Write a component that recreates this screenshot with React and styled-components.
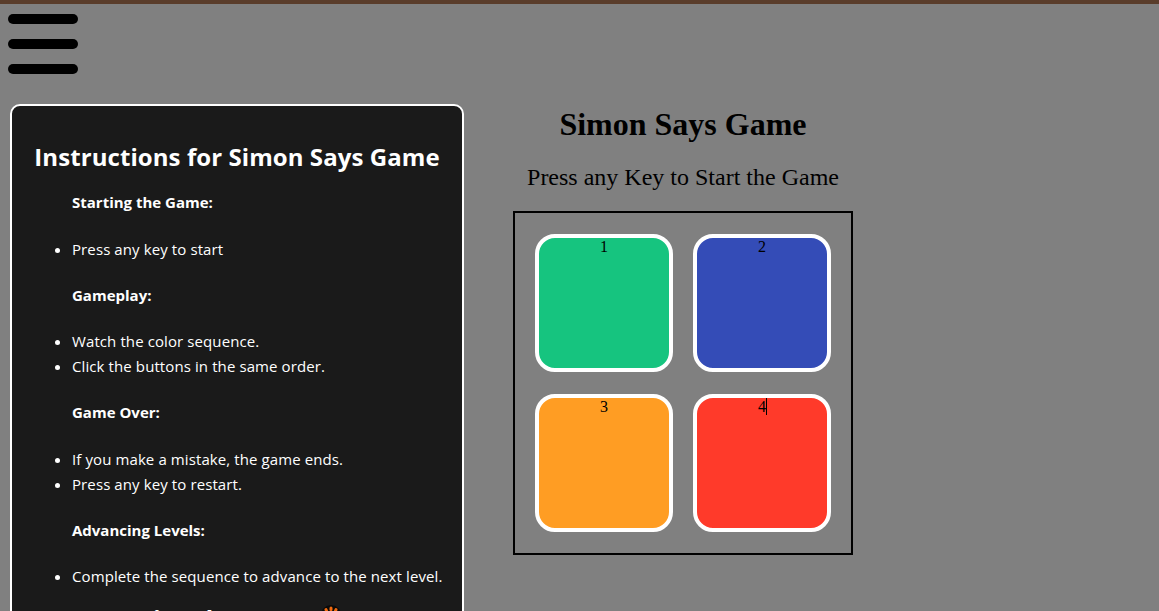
import React from "react";
import styled, { createGlobalStyle } from "styled-components";

const GlobalStyle = createGlobalStyle`
  html, body {
    margin: 0;
    height: 611px;
    overflow: hidden;
  }

  body {
    background-color: #808080;
    border-top: 4px solid #5a3d2b;
    box-sizing: border-box;
    font-family: "Liberation Serif", serif;
  }
`;

const sections = [
  { title: "Starting the Game:", items: ["Press any key to start"] },
  {
    title: "Gameplay:",
    items: ["Watch the color sequence.", "Click the buttons in the same order."],
  },
  {
    title: "Game Over:",
    items: ["If you make a mistake, the game ends.", "Press any key to restart."],
  },
  {
    title: "Advancing Levels:",
    items: ["Complete the sequence to advance to the next level."],
  },
];

const buttons = [
  { label: "1", color: "#16c47f" },
  { label: "2", color: "#344cb7" },
  { label: "3", color: "#ff9d23" },
  { label: "4", color: "#ff3a2a", caret: true },
];

const Burger = () => (
  <BurgerButton>
    <BurgerLine />
    <BurgerLine />
    <BurgerLine />
  </BurgerButton>
);

const ClosingIcon = () => (
  <IconSvg viewBox="0 0 20 20" width="20" height="20">
    <circle cx="10" cy="10" r="10" fill="#0a0a0a" />
    <g stroke="#f26a0f" strokeWidth="3" strokeLinecap="round">
      <path d="M10 3v1.6" />
      <path d="M5 4.6l.6 1.4" />
      <path d="M15 4.6l-.6 1.4" />
    </g>
  </IconSvg>
);

const Instructions = () => (
  <Panel>
    <PanelTitle>Instructions for Simon Says Game</PanelTitle>
    {sections.map((section) => (
      <div key={section.title}>
        <SectionTitle>{section.title}</SectionTitle>
        <List>
          {section.items.map((item) => (
            <li key={item}>{item}</li>
          ))}
        </List>
      </div>
    ))}
    <Closing>
      Enjoy the game! <ClosingIcon />
    </Closing>
  </Panel>
);

const App = () => (
  <>
    <GlobalStyle />
    <Burger />
    <Content>
      <Instructions />
      <Game>
        <GameTitle>Simon Says Game</GameTitle>
        <GameStatus>Press any Key to Start the Game</GameStatus>
        <Board>
          {buttons.map((button) => (
            <GameButton key={button.label} $color={button.color}>
              {button.label}
              {button.caret && <Caret />}
            </GameButton>
          ))}
        </Board>
      </Game>
    </Content>
  </>
);

const BurgerButton = styled.div`
  display: flex;
  flex-direction: column;
  gap: 15px;
  width: 70px;
  padding: 10px 0 0 8px;
`;

const BurgerLine = styled.span`
  display: block;
  height: 10px;
  border-radius: 5px;
  background-color: #000;
`;

const Content = styled.div`
  display: flex;
  align-items: flex-start;
  margin-top: 30px;
  padding-left: 10px;
`;

const Panel = styled.div`
  box-sizing: border-box;
  flex: none;
  width: 454px;
  padding: 20px 20px;
  border: 2px solid #fff;
  border-radius: 10px;
  background-color: #1a1a1a;
  color: #fff;
  font-family: "Open Sans", sans-serif;
`;

const PanelTitle = styled.h2`
  margin: 19px 0 0;
  font-size: 24px;
  line-height: 24px;
  font-weight: 700;
  letter-spacing: 0.07px;
  text-align: center;
  white-space: nowrap;
`;

const SectionTitle = styled.p`
  margin: 23.3px 0 0;
  padding-left: 40px;
  font-size: 15px;
  line-height: 21px;
  font-weight: 700;
`;

const List = styled.ul`
  margin: 23.3px 0 0;
  padding-left: 40px;
  font-size: 15px;
  line-height: 25px;
  letter-spacing: 0.1px;
  white-space: nowrap;
`;

const Closing = styled.h2`
  margin: 14px 0 0;
  font-size: 24px;
  line-height: 32px;
  font-weight: 700;
  text-align: center;
  white-space: nowrap;
`;

const IconSvg = styled.svg`
  margin-right: 9px;
  vertical-align: 3px;
`;

const Game = styled.div`
  display: flex;
  flex-direction: column;
  align-items: center;
  width: 340px;
  margin-left: 49px;
  padding-top: 2px;
`;

const GameTitle = styled.h1`
  margin: 0;
  font-size: 32px;
  line-height: 37px;
  font-weight: 700;
  white-space: nowrap;
`;

const GameStatus = styled.h2`
  margin: 20px 0 0;
  font-size: 24px;
  line-height: 28px;
  font-weight: 400;
  white-space: nowrap;
`;

const Board = styled.div`
  box-sizing: border-box;
  display: grid;
  grid-template-columns: repeat(2, 138px);
  gap: 22px 20px;
  width: 340px;
  height: 344px;
  margin-top: 20px;
  padding: 21px 20px;
  border: 2px solid #000;
`;

const GameButton = styled.div`
  box-sizing: border-box;
  position: relative;
  width: 138px;
  height: 138px;
  border: 4px solid #fff;
  border-radius: 20px;
  background-color: ${(props) => props.$color};
  color: #000;
  font-size: 16px;
  line-height: 18px;
  text-align: center;
`;

const Caret = styled.span`
  position: absolute;
  top: 0;
  left: 69px;
  width: 1px;
  height: 17px;
  background-color: #000;
`;

export default App;
